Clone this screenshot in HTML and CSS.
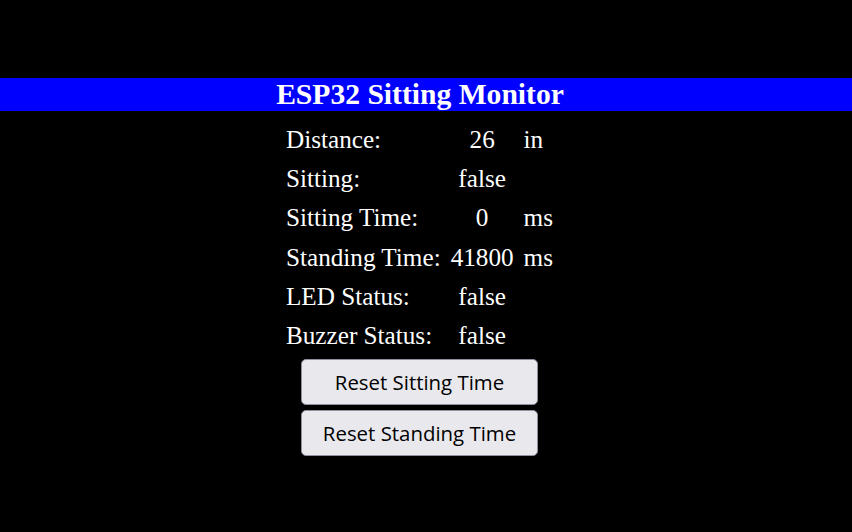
FILE: index.html
```html
<!DOCTYPE html>
<html>
<head>
<meta charset="utf-8">
<title>ESP32 Sitting Monitor</title>
<link rel="stylesheet" href="styles.css">
</head>
<body>
  <h1 class="title">ESP32 Sitting Monitor</h1>
  <div class="content">
    <table class="readings">
      <tr><td class="label">Distance:</td><td class="value">26</td><td class="unit">in</td></tr>
      <tr><td class="label">Sitting:</td><td class="value">false</td><td class="unit"></td></tr>
      <tr><td class="label">Sitting Time:</td><td class="value">0</td><td class="unit">ms</td></tr>
      <tr><td class="label">Standing Time:</td><td class="value">41800</td><td class="unit">ms</td></tr>
      <tr><td class="label">LED Status:</td><td class="value">false</td><td class="unit"></td></tr>
      <tr><td class="label">Buzzer Status:</td><td class="value">false</td><td class="unit"></td></tr>
    </table>
    <div class="actions">
      <button class="btn">Reset Sitting Time</button>
      <button class="btn">Reset Standing Time</button>
    </div>
  </div>
</body>
</html>
```
FILE: styles.css
```css
html, body {
  margin: 0;
  background: #000;
  color: #fff;
  font-family: "Liberation Serif", "Times New Roman", serif;
}

body {
  padding-top: 78px;
}

.title {
  margin: 0;
  background: #0000ff;
  color: #fff;
  font-size: 29.6px;
  font-weight: bold;
  line-height: 33px;
  text-align: center;
  padding-right: 12px;
}

.content {
  display: flex;
  flex-direction: column;
  align-items: center;
  padding-right: 13px;
  padding-top: 9px;
}

.readings {
  border-collapse: collapse;
  font-size: 25.2px;
}

.readings td {
  padding: 0 5px;
  height: 39.2px;
  line-height: 39.2px;
  white-space: nowrap;
}

.label { text-align: left; }
.value { text-align: center; }
.unit { text-align: left; }

.actions {
  display: flex;
  flex-direction: column;
  gap: 5px;
  margin-top: 4px;
}

.btn {
  width: 237px;
  height: 46px;
  font-family: "Open Sans", "Noto Sans", sans-serif;
  font-size: 20.4px;
  font-weight: 500;
  color: #000;
  background: #e9e9ed;
  border: 1px solid #8f8f9d;
  border-radius: 5px;
  padding: 0;
}
```
